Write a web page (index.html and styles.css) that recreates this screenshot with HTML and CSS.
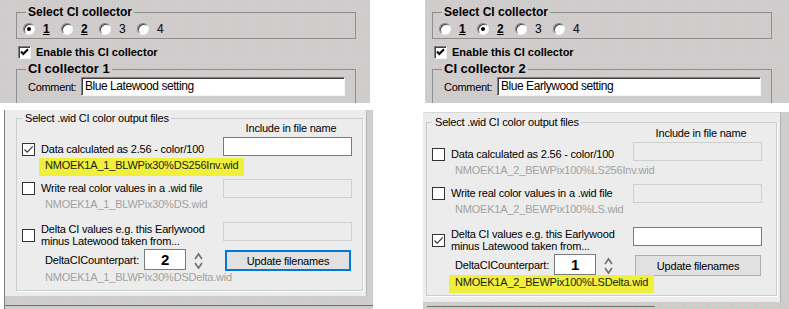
FILE: index.html
```html
<!DOCTYPE html>
<html lang="en">
<head>
  <meta charset="UTF-8" />
  <meta name="viewport" content="width=device-width, initial-scale=1.0"/>
  <title>CI collector settings</title>
  <link rel="stylesheet" href="styles.css">
</head>
<body>
  <div class="sheet">

    <!-- collector 1 -->
    <div class="shot shot-a">
      <div class="classic">
        <fieldset class="cgroup">
          <legend class="title-sm">Select CI collector</legend>
          <div class="radios">
            <label class="radio-opt"><span class="radio on"></span><u class="hot">1</u></label>
            <label class="radio-opt"><span class="radio"></span><u class="hot">2</u></label>
            <label class="radio-opt"><span class="radio"></span><span>3</span></label>
            <label class="radio-opt"><span class="radio"></span><span>4</span></label>
          </div>
        </fieldset>
        <label class="enable">
          <span class="ccheck"><svg width="11" height="11" viewBox="0 0 11 11"><path d="M2 4.5 L4.3 7 L9 2.2" stroke="#000" stroke-width="2" fill="none"/></svg></span>
          Enable this CI collector
        </label>
        <fieldset class="cgroup tall">
          <legend class="title-lg">CI collector 1</legend>
          <div class="comment-row">
            <span class="comment-label">Comment:</span>
            <span class="cinput">Blue Latewood setting</span>
          </div>
        </fieldset>
      </div>

      <div class="modern">
        <div class="pane">
          <fieldset class="mgroup">
            <legend>Select .wid CI color output files</legend>
            <div class="include">Include in file name</div>

            <div class="opt opt-1">
              <div class="opt-left">
                <label class="chk-line">
                  <span class="mcheck"><svg width="11" height="11" viewBox="0 0 11 11"><path d="M1.5 5.5 L4.2 8.2 L9.8 2.4" stroke="#333" stroke-width="1.1" fill="none"/></svg></span>
                  <span>Data calculated as 2.56 - color/100</span>
                </label>
                <div class="fname hl">NMOEK1A_1_BLWPix30%DS256Inv.wid</div>
              </div>
              <div class="mbox"></div>
            </div>

            <div class="opt opt-2">
              <div class="opt-left">
                <label class="chk-line">
                  <span class="mcheck"></span>
                  <span>Write real color values in a .wid file</span>
                </label>
                <div class="fname">NMOEK1A_1_BLWPix30%DS.wid</div>
              </div>
              <div class="mbox off"></div>
            </div>

            <div class="opt opt-3">
              <div class="opt-left">
                <label class="chk-line two">
                  <span class="mcheck"></span>
                  <span>Delta CI values e.g. this Earlywood<br>minus Latewood taken from...</span>
                </label>
              </div>
              <div class="mbox off"></div>
              <div class="counter">
                <span class="counter-label">DeltaCICounterpart:</span>
                <span class="numbox">2</span>
                <svg class="spin" width="9" height="21" viewBox="0 0 9 21"><path d="M1 10 L4.5 5 L8 10" stroke="#707070" stroke-width="1.6" fill="none"/><path d="M1 14 L4.5 19 L8 14" stroke="#707070" stroke-width="1.6" fill="none"/></svg>
                <button class="btn focus">Update filenames</button>
              </div>
              <div class="fname">NMOEK1A_1_BLWPix30%DSDelta.wid</div>
            </div>
          </fieldset>
        </div>
        <div class="base-line"></div>
      </div>
    </div>

    <!-- collector 2 -->
    <div class="shot shot-b">
      <div class="classic">
        <fieldset class="cgroup">
          <legend class="title-sm">Select CI collector</legend>
          <div class="radios">
            <label class="radio-opt"><span class="radio"></span><u class="hot">1</u></label>
            <label class="radio-opt"><span class="radio on"></span><u class="hot">2</u></label>
            <label class="radio-opt"><span class="radio"></span><span>3</span></label>
            <label class="radio-opt"><span class="radio"></span><span>4</span></label>
          </div>
        </fieldset>
        <label class="enable">
          <span class="ccheck"><svg width="11" height="11" viewBox="0 0 11 11"><path d="M2 4.5 L4.3 7 L9 2.2" stroke="#000" stroke-width="2" fill="none"/></svg></span>
          Enable this CI collector
        </label>
        <fieldset class="cgroup tall">
          <legend class="title-lg">CI collector 2</legend>
          <div class="comment-row">
            <span class="comment-label">Comment:</span>
            <span class="cinput">Blue Earlywood setting</span>
          </div>
        </fieldset>
      </div>

      <div class="modern">
        <div class="pane">
          <fieldset class="mgroup">
            <legend>Select .wid CI color output files</legend>
            <div class="include">Include in file name</div>

            <div class="opt opt-1">
              <div class="opt-left">
                <label class="chk-line">
                  <span class="mcheck"></span>
                  <span>Data calculated as 2.56 - color/100</span>
                </label>
                <div class="fname">NMOEK1A_2_BEWPix100%LS256Inv.wid</div>
              </div>
              <div class="mbox off"></div>
            </div>

            <div class="opt opt-2">
              <div class="opt-left">
                <label class="chk-line">
                  <span class="mcheck"></span>
                  <span>Write real color values in a .wid file</span>
                </label>
                <div class="fname">NMOEK1A_2_BEWPix100%LS.wid</div>
              </div>
              <div class="mbox off"></div>
            </div>

            <div class="opt opt-3">
              <div class="opt-left">
                <label class="chk-line two">
                  <span class="mcheck"><svg width="11" height="11" viewBox="0 0 11 11"><path d="M1.5 5.5 L4.2 8.2 L9.8 2.4" stroke="#333" stroke-width="1.1" fill="none"/></svg></span>
                  <span>Delta CI values e.g. this Earlywood<br>minus Latewood taken from...</span>
                </label>
              </div>
              <div class="mbox"></div>
              <div class="counter">
                <span class="counter-label">DeltaCICounterpart:</span>
                <span class="numbox">1</span>
                <svg class="spin" width="9" height="21" viewBox="0 0 9 21"><path d="M1 10 L4.5 5 L8 10" stroke="#707070" stroke-width="1.6" fill="none"/><path d="M1 14 L4.5 19 L8 14" stroke="#707070" stroke-width="1.6" fill="none"/></svg>
                <button class="btn">Update filenames</button>
              </div>
              <div class="fname hl">NMOEK1A_2_BEWPix100%LSDelta.wid</div>
            </div>
          </fieldset>
        </div>
        <div class="base-line"></div>
      </div>
    </div>

  </div>
</body>
</html>
```

FILE: styles.css
```css
body {
  margin: 0;
  background: #fff;
  color: #000;
  font-family: "Liberation Sans", Arial, sans-serif;
}
.sheet {
  display: flex;
  width: 789px;
  height: 309px;
  overflow: hidden;
}
.shot-a {
  width: 373px;
}
.shot-b {
  width: 366px;
  margin-left: 50px;
}

/* old style dialog on top */
.classic {
  box-sizing: border-box;
  height: 103px;
  overflow: hidden;
  padding: 5px 0 0 16px;
  background-color: #cfcece;
  background-image: radial-gradient(circle, rgba(236, 176, 176, 0.55) 0.6px, transparent 0.9px);
  background-size: 3px 3px;
}
.shot-a .classic {
  width: 370px;
}
.shot-b .classic {
  margin-left: 2px;
  padding-left: 7px;
}
.cgroup {
  box-sizing: border-box;
  width: 340px;
  min-width: 0;
  margin: 0;
  padding: 0 0 3px 6px;
  border: 1px solid #8e8e8e;
}
.cgroup legend {
  padding: 0 2px;
  margin-left: 3px;
  font-weight: bold;
}
.title-sm {
  font-size: 12px;
  line-height: 14px;
}
.title-lg {
  font-size: 13px;
  line-height: 14px;
}
.radios {
  display: flex;
  align-items: center;
  height: 12px;
  margin-top: 4px;
  font-size: 12px;
}
.radio-opt {
  display: flex;
  align-items: center;
  gap: 8px;
  width: 38px;
}
.radio {
  box-sizing: border-box;
  display: flex;
  align-items: center;
  justify-content: center;
  width: 12px;
  height: 12px;
  border-radius: 50%;
  background: #fff;
  border: 1px solid;
  border-color: #808080 #f4f4f4 #f4f4f4 #808080;
  box-shadow: inset 1px 1px 0 #404040;
}
.radio.on::after {
  content: "";
  width: 4px;
  height: 4px;
  border-radius: 50%;
  background: #000;
}
.hot {
  font-weight: bold;
}
.enable {
  display: flex;
  align-items: center;
  height: 13px;
  margin: 7px 0 0 2px;
  font-size: 11px;
  font-weight: bold;
  line-height: 13px;
}
.ccheck {
  box-sizing: border-box;
  display: flex;
  align-items: center;
  justify-content: center;
  width: 13px;
  height: 13px;
  margin-right: 5px;
  background: #fff;
  border: 1px solid;
  border-color: #808080 #f4f4f4 #f4f4f4 #808080;
  box-shadow: inset 1px 1px 0 #404040;
}
.tall {
  height: 60px;
  margin-top: 3px;
}
.comment-row {
  display: flex;
  align-items: center;
  margin-top: 1px;
  padding-left: 5px;
}
.comment-label {
  flex: none;
  width: 53px;
  font-size: 11px;
  letter-spacing: -0.3px;
  white-space: nowrap;
}
.cinput {
  box-sizing: border-box;
  width: 264px;
  height: 19px;
  padding-left: 3px;
  background: #fff;
  border: 1px solid;
  border-color: #808080 #f4f4f4 #f4f4f4 #808080;
  box-shadow: inset 1px 1px 0 #404040;
  font-size: 12px;
  letter-spacing: -0.45px;
  line-height: 17px;
}

/* newer style panel below */
.modern {
  box-sizing: border-box;
  height: 199px;
  background-color: #cfcece;
  background-image: radial-gradient(circle, rgba(236, 176, 176, 0.55) 0.6px, transparent 0.9px);
  background-size: 3px 3px;
  font-size: 11px;
  letter-spacing: -0.2px;
}
.shot-a .modern {
  width: 369px;
  margin: 7px 0 0 4px;
  border-left: 1px solid #7e7e7e;
}
.shot-b .modern {
  width: 366px;
  margin-top: 9px;
}
.pane {
  box-sizing: border-box;
  height: 186px;
  padding-top: 1px;
  background: #ececec;
  border-right: 1px solid #b4b4b4;
}
.shot-a .pane {
  width: 362px;
}
.shot-b .pane {
  width: 358px;
  height: 190px;
  padding-top: 2px;
  border-top: 1px solid #d8d8d8;
}
.base-line {
  height: 1px;
  margin-top: 9px;
  background: #6f6f6f;
}
.shot-b .base-line {
  width: 228px;
  margin: 4px 0 0 4px;
}
.mgroup {
  box-sizing: border-box;
  min-width: 0;
  margin: 0 0 0 11px;
  padding: 0 0 2px 5px;
  border: 1px solid #cdcdcd;
  box-shadow: 1px 1px 0 #fff;
}
.shot-a .mgroup {
  width: 347px;
}
.shot-b .mgroup {
  width: 351px;
  margin-left: 3px;
}
.mgroup legend {
  padding: 0 2px 0 3px;
  line-height: 14px;
}
.include {
  box-sizing: border-box;
  width: 129px;
  margin: -3px 0 0 201px;
  padding-left: 7px;
  text-align: center;
  line-height: 13px;
}
.shot-b .include {
  margin-top: -2px;
}
.opt {
  display: grid;
  grid-template-columns: 201px 129px;
  align-items: start;
}
.opt-1 {
  margin-top: 2px;
}
.opt-1 .opt-left {
  padding-top: 6px;
}
.opt-2 {
  margin-top: 3px;
}
.opt-2 .opt-left {
  padding-top: 3px;
}
.opt-3 {
  margin-top: 7px;
}
.opt-3 .opt-left {
  padding-top: 1px;
}
.chk-line {
  display: flex;
  align-items: center;
  gap: 6px;
  line-height: 13px;
  white-space: nowrap;
}
.chk-line.two {
  line-height: 12px;
}
.mcheck {
  box-sizing: border-box;
  flex: none;
  display: flex;
  align-items: center;
  justify-content: center;
  width: 13px;
  height: 13px;
  background: #fff;
  border: 1px solid #333;
}
.fname {
  width: fit-content;
  margin: 2px 0 0 17px;
  padding: 0 6px 3px;
  line-height: 15px;
  white-space: nowrap;
  color: #a2a2a2;
}
.opt-3 .fname {
  margin-top: 0;
}
.fname.hl {
  background: #f0f03c;
  color: #1b1b1b;
}
.mbox {
  box-sizing: border-box;
  height: 19px;
  background: #fff;
  border: 1px solid #7a7a7a;
}
.mbox.off {
  background: transparent;
  border-color: #cfcfcf;
}
.counter {
  grid-column: 1 / -1;
  display: flex;
  align-items: center;
  height: 21px;
  margin-top: 2px;
  padding-left: 23px;
}
.counter-label {
  width: 99px;
}
.numbox {
  box-sizing: border-box;
  width: 42px;
  height: 21px;
  background: #fff;
  border: 1px solid #7a7a7a;
  text-align: center;
  font-size: 15px;
  font-weight: bold;
  line-height: 19px;
}
.spin {
  margin-left: 8px;
}
.btn {
  box-sizing: border-box;
  width: 126px;
  height: 21px;
  margin: 2px 0 0 22px;
  padding: 0;
  background: #e1e1e1;
  border: 1px solid #adadad;
  font-family: "Liberation Sans", Arial, sans-serif;
  font-size: 11px;
  letter-spacing: -0.2px;
  color: #000;
}
.btn.focus {
  border: 2px solid #0078d7;
}
```
